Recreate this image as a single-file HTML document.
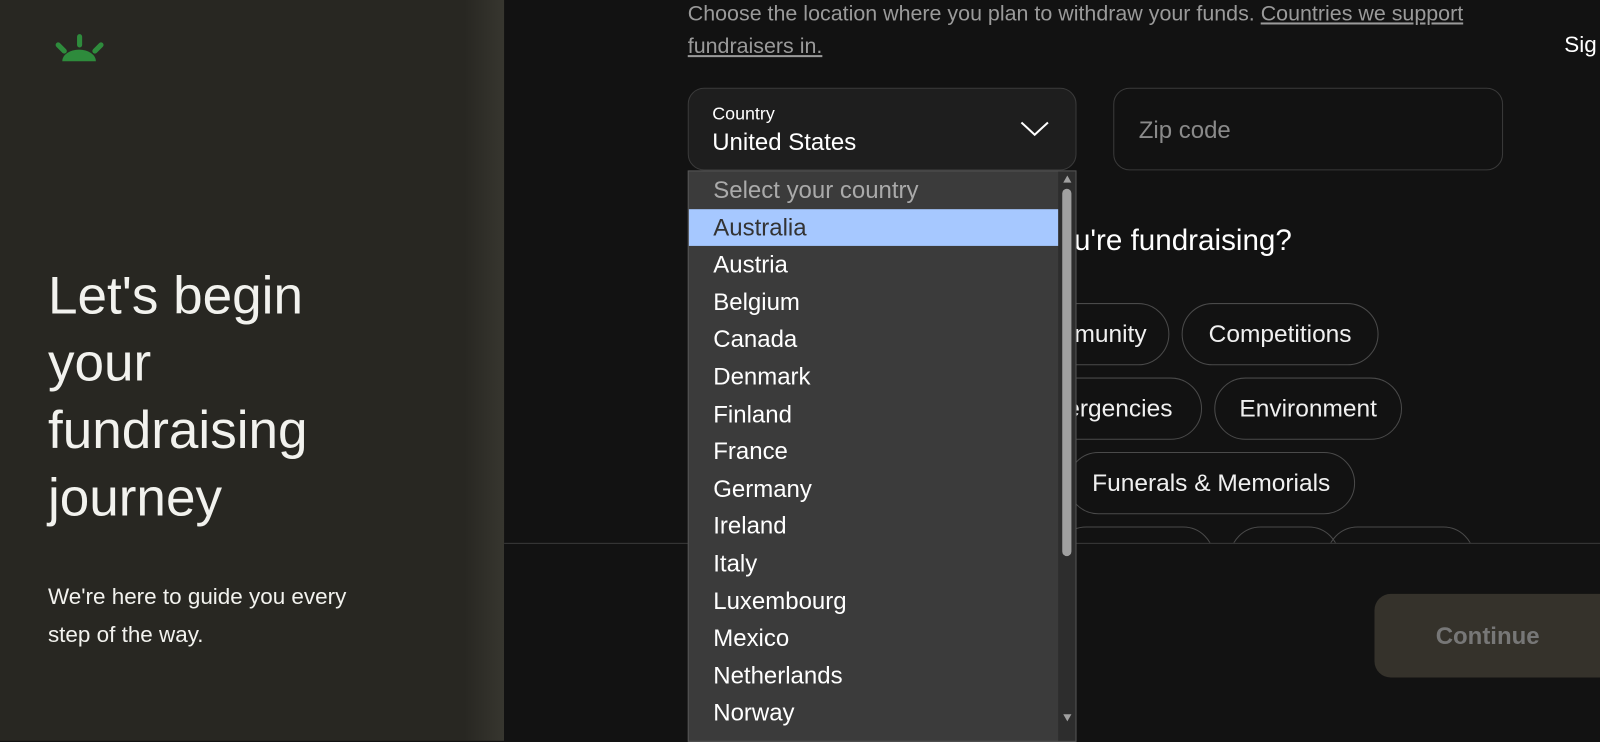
<!DOCTYPE html>
<html><head><meta charset="utf-8"><style>
*{margin:0;padding:0;box-sizing:border-box}
body{width:1600px;height:726px;overflow:hidden;background:#121212;font-family:"Liberation Sans",sans-serif;position:relative;color:#fff}
#w{position:absolute;left:0;top:0;width:1600px;height:726px;transform:scale(1.0204);transform-origin:0 0}
.left{position:absolute;left:0;top:0;width:494px;height:726px;background:linear-gradient(90deg,#282722 0,#282722 455px,#37362f 494px)}
.h1{position:absolute;left:47px;top:257px;font-size:52px;line-height:66px;color:#f2f2ee;width:320px}
.sub{position:absolute;left:47px;top:566px;font-size:22px;line-height:37px;color:#f2f2ee;width:325px}
.abs{position:absolute}
.chip{position:absolute;height:61px;border:1px solid #4a4a4a;border-radius:31px;font-size:24px;color:#f0f0f0;display:flex;align-items:center;justify-content:center;white-space:nowrap}
.dd{position:absolute;left:674px;top:167px;width:381px;height:560px;background:#3b3b3b;border:1px solid #555;overflow:hidden}
.dd div{height:36.6px;line-height:36.6px;padding-left:24px;font-size:23.5px;color:#fff;width:363px}
</style></head><body><div id="w">
<div class="left">
<svg class="abs" style="left:50px;top:30px" width="54" height="32" viewBox="0 0 54 32">
<path d="M11 30 A16 11 0 0 1 44 30 Z" fill="#2e8b3c"/>
<line x1="28" y1="6" x2="28" y2="14" stroke="#2e8b3c" stroke-width="5" stroke-linecap="round"/>
<line x1="7" y1="14" x2="13" y2="20" stroke="#2e8b3c" stroke-width="5" stroke-linecap="round"/>
<line x1="49" y1="14" x2="43" y2="20" stroke="#2e8b3c" stroke-width="5" stroke-linecap="round"/>
</svg>
<div class="h1">Let's begin your fundraising journey</div>
<div class="sub">We're here to guide you every step of the way.</div>
</div>
<div class="abs" style="left:674px;top:-2px;width:790px;font-size:21px;line-height:32px;color:#9a9a9a">Choose the location where you plan to withdraw your funds. <span style="text-decoration:underline">Countries we support fundraisers in.</span></div>
<div class="abs" style="left:1533px;top:31px;font-size:22px;color:#fff">Sig</div>
<div class="abs" style="left:674px;top:86px;width:381px;height:81px;border:1px solid #3a3a3a;border-radius:16px;background:#1e1e1e">
<div class="abs" style="left:23px;top:14px;font-size:17.5px;color:#fff">Country</div>
<div class="abs" style="left:23px;top:39px;font-size:23.5px;color:#fff">United States</div>
<svg class="abs" style="left:324px;top:30px" width="30" height="18" viewBox="0 0 30 18"><path d="M2 3 L15 15 L28 3" stroke="#fff" stroke-width="2" fill="none"/></svg>
</div>
<div class="abs" style="left:1091px;top:86px;width:382px;height:81px;border:1px solid #3a3a3a;border-radius:16px">
<div class="abs" style="left:24px;top:27px;font-size:23.5px;color:#8a8a8a">Zip code</div>
</div>
<div class="abs" style="left:500px;top:220px;width:766px;text-align:right;font-size:29px;color:#fff;white-space:nowrap">What best describes why you're fundraising?</div>
<div class="chip" style="left:880px;top:297px;width:266px;padding-left:100px">Community</div>
<div class="chip" style="left:1158px;top:297px;width:193px">Competitions</div>
<div class="chip" style="left:880px;top:370px;width:298px;padding-left:100px">Emergencies</div>
<div class="chip" style="left:1190px;top:370px;width:184px">Environment</div>
<div class="chip" style="left:1046px;top:443px;width:282px">Funerals &amp; Memorials</div>
<div class="abs" style="left:494px;top:510px;width:1106px;height:22px;overflow:hidden">
<div class="chip" style="left:540px;top:6px;width:156px"></div>
<div class="chip" style="left:711px;top:6px;width:108px"></div>
<div class="chip" style="left:806px;top:6px;width:145px"></div>
</div>
<div class="abs" style="left:494px;top:532px;width:1106px;height:194px;background:#121212;border-top:1px solid #3a3a3a"></div>
<div class="abs" style="left:1347px;top:582px;width:240px;height:82px;background:#35322b;border-radius:16px;font-size:23.5px;font-weight:bold;color:#777;line-height:82px;padding-left:60px">Continue</div>
<div class="dd">
<div style="color:#aaa">Select your country</div>
<div style="background:#a6c8ff;color:#333">Australia</div>
<div>Austria</div><div>Belgium</div><div>Canada</div><div>Denmark</div><div>Finland</div><div>France</div><div>Germany</div><div>Ireland</div><div>Italy</div><div>Luxembourg</div><div>Mexico</div><div>Netherlands</div><div>Norway</div>
<span class="abs" style="right:0;top:0;width:17px;height:560px;background:#2d2d2d"></span>
<span class="abs" style="right:4px;top:17px;width:9px;height:360px;background:#a0a0a0;border-radius:5px"></span>
<span class="abs" style="right:4px;top:4px;width:0;height:0;border-left:4px solid transparent;border-right:4px solid transparent;border-bottom:7px solid #a0a0a0"></span>
<span class="abs" style="right:4px;top:532px;width:0;height:0;border-left:4px solid transparent;border-right:4px solid transparent;border-top:7px solid #a0a0a0"></span>
</div>
</div></body></html>
